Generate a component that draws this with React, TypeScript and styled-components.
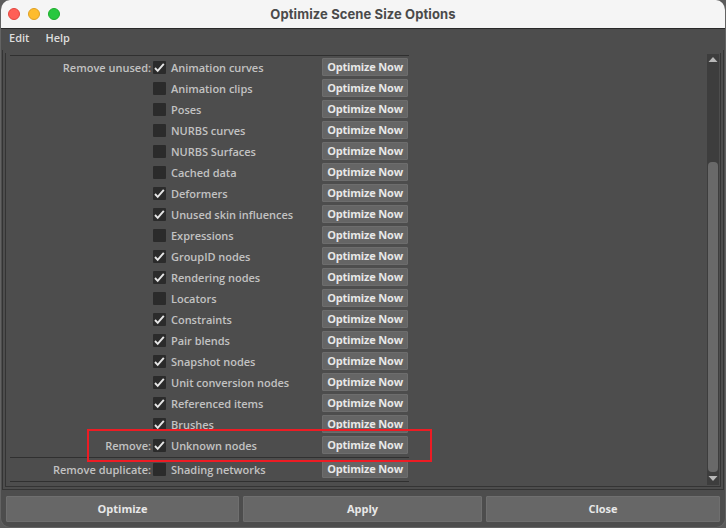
import React from "react";
import styled, { createGlobalStyle } from "styled-components";

const GlobalStyle = createGlobalStyle`
  * { box-sizing: border-box; }
  html, body { margin: 0; padding: 0; background: #5b5b5b; overflow: hidden; }
  button { font: inherit; color: inherit; padding: 0; }
`;

const Window = styled.main`
  width: 726px;
  height: 528px;
  display: flex;
  flex-direction: column;
  overflow: hidden;
  background: #4d4d4d;
  border-radius: 10px;
  border: solid #636363;
  border-width: 0 1px 1px;
  font: 600 11px/21px "Open Sans", "Noto Sans", sans-serif;
  color: #c2c2c2;
`;

const TitleBar = styled.header`
  height: 29px;
  flex: none;
  display: grid;
  grid-template-columns: 80px 1fr 80px;
  align-items: center;
  background: #f5f5f5;
  border-bottom: 1px solid #292929;
  margin: 0 -1px;
`;

const Lights = styled.div`
  display: flex;
  gap: 8px;
  padding-left: 8px;
`;

const Light = styled.span<{ $fill: string; $edge: string }>`
  width: 12px;
  height: 12px;
  border-radius: 50%;
  background: ${(p) => p.$fill};
  border: 1px solid ${(p) => p.$edge};
`;

const Title = styled.h1`
  margin: 0;
  text-align: center;
  font: 700 13px/28px Inter, sans-serif;
  letter-spacing: 0.1px;
  color: #4a4a4a;
`;

const MenuBar = styled.nav`
  height: 21px;
  flex: none;
  display: flex;
  gap: 16px;
  padding-left: 8px;
  line-height: 18px;
  color: #dddddd;
`;

const MenuItem = styled.span`
  letter-spacing: 0;
`;

const Frame = styled.section`
  height: 440px;
  flex: none;
  margin: 0 1px;
  padding: 3px 2px 2px;
  border: solid #343434;
  border-width: 0 1px 1px;
`;

const Viewport = styled.div`
  height: 434px;
  display: flex;
  justify-content: space-between;
  border: solid #343434;
  border-width: 0 1px 1px;
`;

const Options = styled.div`
  position: relative;
  width: 399px;
  margin-left: 4px;
  padding-top: 2px;
`;

const Group = styled.div`
  border-top: 1px solid #303030;
  padding-top: 1px;
`;

const LastRule = styled.div`
  border-top: 1px solid #303030;
`;

const Row = styled.div`
  height: 21px;
  display: grid;
  grid-template-columns: 141px 15px 156px 87px;
  align-items: start;
`;

const GroupName = styled.span`
  text-align: right;
  white-space: nowrap;
`;

const Box = styled.span`
  width: 13px;
  height: 13px;
  margin: 4px 0 0 2px;
  background: #2b2b2b;
  border-radius: 1px;
  svg { display: block; }
`;

const Label = styled.span`
  padding-left: 5px;
  white-space: nowrap;
  letter-spacing: -0.03px;
`;

const SmallButton = styled.button`
  width: 86px;
  height: 18px;
  margin-top: 1px;
  border: 1px solid #6d6d6d;
  border-radius: 1px;
  background: #656565;
  color: #e8e8e8;
  font-weight: 700;
  line-height: 16px;
  letter-spacing: -0.18px;
  white-space: nowrap;
`;

const GroupGap = styled.div`
  height: 1px;
`;

const Highlight = styled.div`
  position: absolute;
  left: 77px;
  top: 376px;
  width: 345px;
  height: 33px;
  border: 2px solid #ed1c24;
`;

const ScrollBar = styled.div`
  width: 12px;
  height: 431px;
  margin: 1px 1px 0 0;
  display: flex;
  flex-direction: column;
  align-items: center;
  background: #3d3d3d;
`;

const Thumb = styled.div`
  width: 10px;
  height: 310px;
  margin: 99px 0 3px;
  flex: none;
  border-radius: 4px;
  background: #696969;
`;

const Arrow = styled.svg`
  display: block;
  flex: none;
`;

const Footer = styled.footer`
  display: grid;
  grid-template-columns: 233px 239px 234px;
  column-gap: 4px;
  padding: 6px 0 0 5px;
`;

const FooterButton = styled.button`
  height: 26px;
  border: 1px solid #6f6f6f;
  border-radius: 1px;
  background: #676767;
  color: #e8e8e8;
  font-size: 11px;
  font-weight: 700;
  line-height: 24px;
`;

type Item = { label: string; on: boolean; group?: string };

const unused: Item[] = [
  { label: "Animation curves", on: true, group: "Remove unused:" },
  { label: "Animation clips", on: false },
  { label: "Poses", on: false },
  { label: "NURBS curves", on: false },
  { label: "NURBS Surfaces", on: false },
  { label: "Cached data", on: false },
  { label: "Deformers", on: true },
  { label: "Unused skin influences", on: true },
  { label: "Expressions", on: false },
  { label: "GroupID nodes", on: true },
  { label: "Rendering nodes", on: true },
  { label: "Locators", on: false },
  { label: "Constraints", on: true },
  { label: "Pair blends", on: true },
  { label: "Snapshot nodes", on: true },
  { label: "Unit conversion nodes", on: true },
  { label: "Referenced items", on: true },
  { label: "Brushes", on: true },
  { label: "Unknown nodes", on: true, group: "Remove:" },
];

const duplicate: Item = { label: "Shading networks", on: false, group: "Remove duplicate:" };

function OptionRow({ item }: { item: Item }) {
  return (
    <Row>
      <GroupName>{item.group}</GroupName>
      <Box>
        {item.on && (
          <svg width="13" height="13" viewBox="0 0 13 13" fill="none">
            <path d="M2 7 4.7 9.8 10.8 2.8" stroke="#e6e6e6" strokeWidth="1.9" />
          </svg>
        )}
      </Box>
      <Label>{item.label}</Label>
      <SmallButton>Optimize Now</SmallButton>
    </Row>
  );
}

export default function App() {
  return (
    <>
      <GlobalStyle />
      <Window>
        <TitleBar>
          <Lights>
            <Light $fill="#ff5f57" $edge="#e2463f" />
            <Light $fill="#febc2e" $edge="#dfa023" />
            <Light $fill="#28c840" $edge="#1dad2b" />
          </Lights>
          <Title>Optimize Scene Size Options</Title>
        </TitleBar>
        <MenuBar>
          <MenuItem>Edit</MenuItem>
          <MenuItem>Help</MenuItem>
        </MenuBar>
        <Frame>
          <Viewport>
            <Options>
              <Group>
                {unused.map((item) => (
                  <OptionRow key={item.label} item={item} />
                ))}
              </Group>
              <GroupGap />
              <Group>
                <OptionRow item={duplicate} />
              </Group>
              <GroupGap />
              <LastRule />
              <Highlight />
            </Options>
            <ScrollBar>
              <Arrow width="10" height="9" viewBox="0 0 10 9">
                <path d="M0.5 8 5 3 9.5 8Z" fill="#b8b8b8" />
              </Arrow>
              <Thumb />
              <Arrow width="10" height="9" viewBox="0 0 10 9">
                <path d="M0.5 1 5 6 9.5 1Z" fill="#b8b8b8" />
              </Arrow>
            </ScrollBar>
          </Viewport>
        </Frame>
        <Footer>
          <FooterButton>Optimize</FooterButton>
          <FooterButton>Apply</FooterButton>
          <FooterButton>Close</FooterButton>
        </Footer>
      </Window>
    </>
  );
}
